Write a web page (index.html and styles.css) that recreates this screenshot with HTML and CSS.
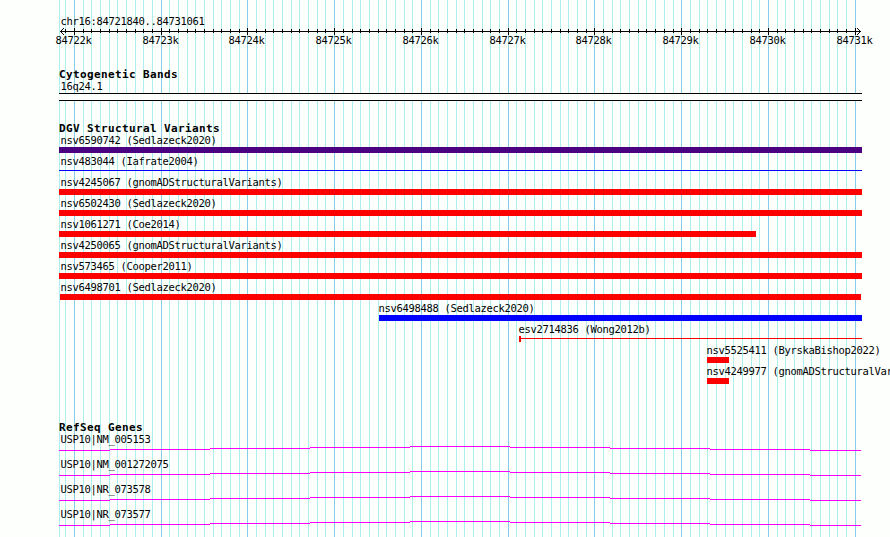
FILE: index.html
```
<!DOCTYPE html>
<html lang="en">
<head>
<meta charset="utf-8">
<title>chr16:84721840..84731061</title>
<link rel="stylesheet" href="styles.css">
</head>
<body>
<svg class="grid" id="grid" width="890" height="537" shape-rendering="crispEdges"></svg>
<main class="browser">
  <div class="label">chr16:84721840..84731061</div>
  <svg class="ruler" id="ruler" width="890" height="17"></svg>
  <section class="track">
    <h2 class="title">Cytogenetic Bands</h2>
    <div class="label">16q24.1</div>
    <div class="band"></div>
  </section>
  <section class="track track-variants">
    <h2 class="title">DGV Structural Variants</h2>
    <div id="variants"></div>
  </section>
  <section class="track track-genes">
    <h2 class="title">RefSeq Genes</h2>
    <div id="genes"></div>
  </section>
</main>
<script src="main.js"></script>
</body>
</html>
```
FILE: styles.css
```
body {
  margin: 0;
  width: 890px;
  height: 537px;
  overflow: hidden;
  position: relative;
  background: #fdfffc;
  color: #000;
  font-family: "DejaVu Sans Mono", "Liberation Mono", monospace;
  font-size: 10px;
}
.grid {
  position: absolute;
  left: 0;
  top: 0;
}
.minor { fill: #afeeee; }
.major { fill: #87ceeb; }
.browser {
  position: relative;
  padding: 15px 0 0 59px;
}
.label {
  height: 13px;
  line-height: 13px;
  padding-left: 1.5px;
  font-size: 10.5px;
  letter-spacing: -0.321px;
  white-space: pre;
}
.ruler {
  display: block;
  margin-left: -59px;
}
.ruler text {
  font-size: 10.5px;
  letter-spacing: -0.321px;
}
.track { margin-top: 23px; }
.track-variants { margin-top: 21px; }
.track-genes { margin-top: 35px; }
.title {
  margin: 0;
  height: 12px;
  line-height: 13px;
  font-size: 11px;
  font-weight: bold;
  letter-spacing: 0.378px;
  white-space: pre;
}
.band {
  box-sizing: border-box;
  width: 803px;
  height: 8px;
  border-top: 1px solid #000;
  border-bottom: 1px solid #000;
  background: #fdfffc;
}
.variant { height: 21px; }
.variant .label { padding-left: 0.5px; }
.bar { height: 6px; }
.purple { background: #4b0082; }
.red { background: #f00; }
.blue { background: #00f; }
.thin-blue { background: linear-gradient(#00f, #00f) 0 4px / 100% 1px no-repeat; background-position: 0 2px; }
.thin-red {
  background:
    linear-gradient(#f00, #f00) 0 0 / 2px 6px no-repeat,
    linear-gradient(#f00, #f00) 0 2px / 100% 1px no-repeat;
}
.gene { height: 25px; }
.trace { display: block; fill: #f0f; }
```
FILE: main.js
```
const START = 84721840;
const END = 84731061;
const position = bp => Math.round(60 + (bp - START) * 800 / (END - START));

const rect = (x, y, w, h, cls = '') =>
  `<rect class="${cls}" x="${x}" y="${y}" width="${w}" height="${h}"/>`;

let grid = rect(59, 0, 1, 537, 'minor');
let ruler = '<g shape-rendering="crispEdges">' + rect(60, 3, 801, 1);
let names = '';
for (let bp = 84721900; bp <= 84731000; bp += 100) {
  const x = position(bp);
  const major = bp % 1000 === 0;
  grid += rect(x, 0, 1, 537, major ? 'major' : 'minor');
  ruler += major ? rect(x, 0, 1, 7) : rect(x, 1, 1, 4);
  if (major) names += `<text x="${x - 18.5}" y="16">${bp / 1000}k</text>`;
}
for (let i = 1; i < 4; i++) {
  ruler += rect(60 + i, 3 - i, 1, 1) + rect(60 + i, 3 + i, 1, 1);
  ruler += rect(860 - i, 3 - i, 1, 1) + rect(860 - i, 3 + i, 1, 1);
}
document.getElementById('grid').innerHTML = grid;
document.getElementById('ruler').innerHTML = ruler + '</g>' + names;

// name, label x, bar start, bar end, bar style
const variants = [
  ['nsv6590742 (Sedlazeck2020)', 60, 59, 862, 'purple'],
  ['nsv483044 (Iafrate2004)', 60, 59, 862, 'thin-blue'],
  ['nsv4245067 (gnomADStructuralVariants)', 60, 59, 862, 'red'],
  ['nsv6502430 (Sedlazeck2020)', 60, 59, 862, 'red'],
  ['nsv1061271 (Coe2014)', 60, 59, 756, 'red'],
  ['nsv4250065 (gnomADStructuralVariants)', 60, 59, 862, 'red'],
  ['nsv573465 (Cooper2011)', 60, 59, 862, 'red'],
  ['nsv6498701 (Sedlazeck2020)', 60, 60, 861, 'red'],
  ['nsv6498488 (Sedlazeck2020)', 378, 379, 862, 'blue'],
  ['esv2714836 (Wong2012b)', 518, 519, 862, 'thin-red'],
  ['nsv5525411 (ByrskaBishop2022)', 706, 707, 729, 'red'],
  ['nsv4249977 (gnomADStructuralVariants)', 706, 707, 729, 'red']
];
document.getElementById('variants').innerHTML = variants.map(([name, lx, from, to, style]) =>
  `<div class="variant"><div class="label" style="margin-left:${lx - 59}px">${name}</div>` +
  `<div class="bar ${style}" style="margin-left:${from - 59}px;width:${to - from}px"></div></div>`
).join('');

const edges = [0, 51, 151, 251, 351, 451, 551, 651, 751, 802];
const levels = [4, 3, 2, 1, 0, 1, 2, 3, 4];
const trace = levels.map((y, i) => rect(edges[i], y, edges[i + 1] - edges[i], 1)).join('');
document.getElementById('genes').innerHTML =
  ['USP10|NM_005153', 'USP10|NM_001272075', 'USP10|NR_073578', 'USP10|NR_073577'].map(name =>
    `<div class="gene"><div class="label">${name}</div>` +
    `<svg class="trace" width="802" height="5" shape-rendering="crispEdges">${trace}</svg></div>`
  ).join('');
```
